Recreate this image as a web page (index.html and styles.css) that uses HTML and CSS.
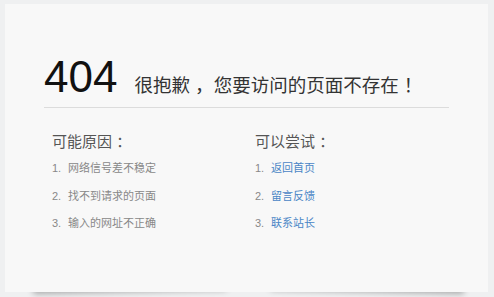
FILE: index.html
```html
<!DOCTYPE html>
<html lang="zh-CN">
<head>
    <meta charset="UTF-8">
    <meta name="viewport" content="width=device-width, initial-scale=1.0">
    <title>404 页面不存在</title>
    <link rel="stylesheet" href="styles.css">
</head>
<body>
    <div class="card">
        <div class="head">
            <span class="code">404</span>
            <span class="sorry">很抱歉<span class="punct">，</span>您要访问的页面不存在<span class="punct">！</span></span>
        </div>

        <div class="cols">
            <div class="col">
                <h3>可能原因<span class="punct">：</span></h3>
                <ul>
                    <li><span class="num">1.</span>网络信号差不稳定</li>
                    <li><span class="num">2.</span>找不到请求的页面</li>
                    <li><span class="num">3.</span>输入的网址不正确</li>
                </ul>
            </div>
            <div class="col">
                <h3>可以尝试<span class="punct">：</span></h3>
                <ul>
                    <li><span class="num">1.</span><a href="#">返回首页</a></li>
                    <li><span class="num">2.</span><a href="#">留言反馈</a></li>
                    <li><span class="num">3.</span><a href="#">联系站长</a></li>
                </ul>
            </div>
        </div>
    </div>
</body>
</html>
```

FILE: styles.css
```css
/* 404 page */
html, body {
    margin: 0;
    height: 100%;
}
body {
    font-family: "Liberation Sans", "Noto Sans CJK SC", sans-serif;
    background-color: #eff0f1;
    padding: 4px 6px 0 5px;
    box-sizing: border-box;
}
.card {
    position: relative;
    height: 288px;
    background: #f8f8f8;
    padding: 51px 39px 0 39px;
    box-sizing: border-box;
}
/* curled shadow under the card */
.card::before, .card::after {
    content: "";
    position: absolute;
    z-index: -1;
    bottom: 8px;
    width: 40%;
    height: 20px;
    box-shadow: 0 8px 6px rgba(0, 0, 0, 0.3);
}
.card::before {
    left: 28px;
    transform: rotate(-1.2deg);
}
.card::after {
    right: 24px;
    transform: rotate(1.2deg);
}
.head {
    display: flex;
    align-items: baseline;
    height: 52px;
    border-bottom: 1px solid #dcdcdc;
}
.code {
    font-size: 44px;
    line-height: 44px;
    color: #111;
}
.sorry {
    margin-left: 17px;
    font-size: 18.5px;
    line-height: 20px;
    color: #333;
}
/* push full-width punctuation towards the middle of its cell */
.punct {
    padding-left: 0.28em;
}
.cols {
    display: grid;
    grid-template-columns: 203px 203px;
    padding: 20px 0 0 8px;
}
h3 {
    margin: 0;
    font-size: 15px;
    font-weight: normal;
    line-height: 27px;
    color: #555;
}
ul {
    list-style: none;
    margin: 0;
    padding: 0;
}
li {
    font-size: 11px;
    line-height: 27.5px;
    color: #888;
}
.num {
    display: inline-block;
    width: 16px;
}
a {
    color: #4a86c6;
    text-decoration: none;
}
```
